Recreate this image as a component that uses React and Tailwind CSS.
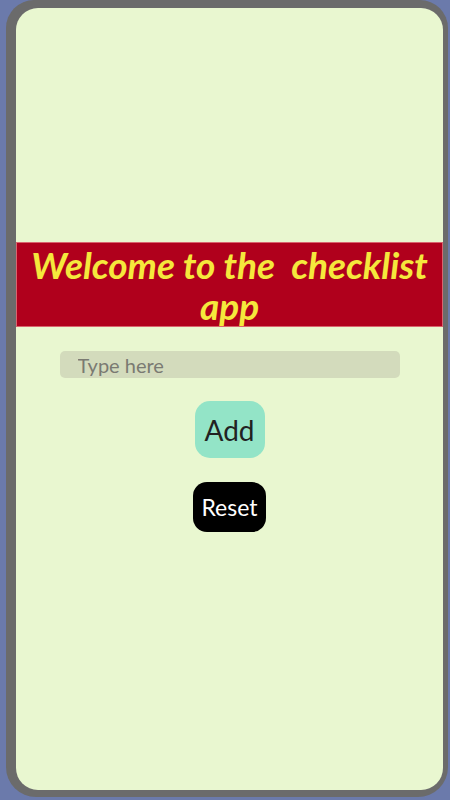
import React, { useState } from 'react';

export default function App() {
  const [text, setText] = useState('');

  return (
    <div className="bg-[#6b7aab] w-[450px] h-[800px] overflow-hidden font-['Lato',sans-serif]">
      <div className="ml-[6px] w-[442px] h-[797px] bg-[#6b6b6b] rounded-b-[30px] rounded-t-[28px] pl-[10px] pr-[5px] pt-2 pb-[7px]">
        <div className="h-full bg-[#e9f7d0] rounded-[22px] flex flex-col items-center pt-[234px]">
          {/* Header */}
          <h1 className="w-full bg-[#b0001c] border border-[#d9646e] text-[#f5e83c] text-[37px] leading-[41px] font-bold italic text-center pt-[1px] pb-0 whitespace-pre-wrap">
            {'Welcome to the  checklist app'}
          </h1>

          <input
            type="text"
            value={text}
            onChange={(e) => setText(e.target.value)}
            placeholder="Type here"
            className="mt-6 w-[340px] h-[27px] bg-[#d3dbbc] rounded-[5px] px-[18px] text-[20px] text-[#555] placeholder:text-[#7a7a72] outline-none"
          />

          <button className="mt-[23px] w-[70px] h-[57px] bg-[#93e4c7] rounded-[15px] text-[28px] text-[#222]">
            Add
          </button>

          <button className="mt-[24px] w-[73px] h-[50px] bg-black rounded-[14px] text-[23px] text-white">
            Reset
          </button>
        </div>
      </div>
    </div>
  );
}
